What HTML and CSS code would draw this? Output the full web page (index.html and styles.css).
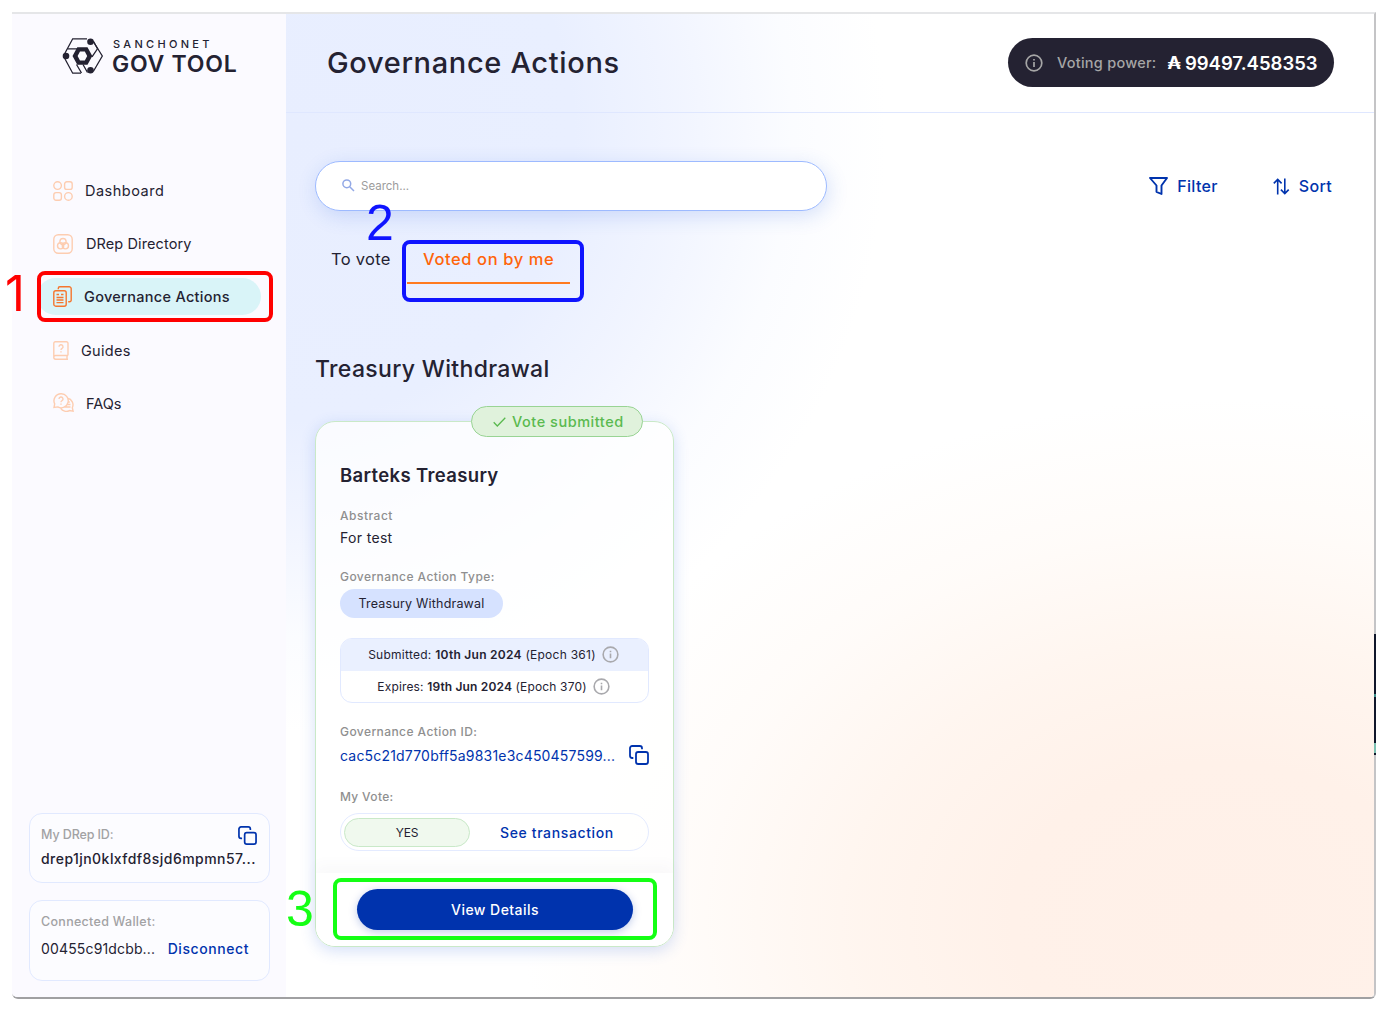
FILE: index.html
```html
<!DOCTYPE html>
<html lang="en">
<head>
<meta charset="utf-8">
<title>Governance Actions</title>
<link rel="stylesheet" href="styles.css">
</head>
<body>
<svg class="defs" width="0" height="0" aria-hidden="true">
  <symbol id="i-copy" viewBox="0 0 20 20"><g fill="none" stroke="currentColor" stroke-width="1.8"><rect x="7" y="7" width="12" height="12" rx="2.2"/><path d="M4.3 13H3.2A2.2 2.2 0 0 1 1 10.8V3.2A2.2 2.2 0 0 1 3.2 1h7.6A2.2 2.2 0 0 1 13 3.2v1.1"/></g></symbol>
  <symbol id="i-info" viewBox="0 0 18 18"><circle cx="9" cy="9" r="7.8" fill="none" stroke="currentColor" stroke-width="1.7"/><path d="M9 8v5M9 5v1.6" stroke="currentColor" stroke-width="1.7"/></symbol>
</svg>
<div class="window">
  <aside class="sidebar">
    <div class="logo">
      <svg width="42" height="38" viewBox="0 0 42 38">
        <g fill="none" stroke="#242232" stroke-width="1.3">
          <path d="M25 1.800H10.700L2.500 17M2.500 21l8.200 15.200H19M31 4l9.300 15-9 15.500"/>
          <path d="M5.500 11.800H15M31.500 4.500l4 7.300-5.500 8M14.500 27.500l5 8.500M21 27.500l4.500 8"/>
        </g>
        <path fill="#242232" fill-rule="evenodd" d="M15.300 10.200h10.200L30.300 19l-4.800 8.800H15.300L10.500 19zM18 14.600 15.600 19l2.400 4.400h4.800L25.200 19l-2.400-4.400z"/>
        <circle cx="28.500" cy="4.800" r="3.300" fill="#242232"/><circle cx="4" cy="19" r="3.300" fill="#242232"/><circle cx="28.500" cy="33.200" r="3.300" fill="#242232"/>
      </svg>
      <div class="logo-text"><span class="logo-top">SANCHONET</span><span class="logo-main">GOV TOOL</span></div>
    </div>
    <nav class="nav">
      <a class="nav-item"><svg width="20" height="20" viewBox="0 0 20 20"><g fill="none" stroke="currentColor" stroke-width="1.400"><circle cx="4.600" cy="4.600" r="3.800"/><rect x="11.600" y="0.800" width="7.600" height="7.600" rx="2.200"/><rect x="0.800" y="11.600" width="7.600" height="7.600" rx="2.200"/><circle cx="15.400" cy="15.400" r="3.800"/></g></svg><span class="n-dash">Dashboard</span></a>
      <a class="nav-item"><svg width="20" height="20" viewBox="0 0 20 20"><g fill="none" stroke="currentColor" stroke-width="1.400"><rect x="0.800" y="0.800" width="18.400" height="18.400" rx="4.500"/><circle cx="10" cy="7.600" r="3.100"/><circle cx="7.600" cy="11.800" r="3.100"/><circle cx="12.400" cy="11.800" r="3.100"/></g></svg><span class="n-drep">DRep Directory</span></a>
      <a class="nav-item active"><svg width="19" height="21" viewBox="0 0 19 21"><g fill="none" stroke="currentColor" stroke-width="1.400"><rect x="0.800" y="4.800" width="12.400" height="15.400" rx="2"/><path d="M5.300 3.200V2.300A1.500 1.500 0 0 1 6.800.8h9.400a2 2 0 0 1 2 2v11.400a1.500 1.500 0 0 1-1.500 1.500h-1.500M3.500 8.500h2.500M8 8.500h2.500M3.500 11.500h7M3.500 14h7M3.500 16.600h7"/></g></svg><span class="n-gov">Governance Actions</span></a>
      <a class="nav-item"><svg width="16" height="19" viewBox="0 0 16 19"><g fill="none" stroke="currentColor" stroke-width="1.400"><path d="M15 14.500V2.300A1.500 1.500 0 0 0 13.500.8H2.300A1.500 1.500 0 0 0 .8 2.300v13.900M15 14.500H2.600a1.850 1.850 0 0 0 0 3.700H15M14 14.500v3.700"/><path d="M6 5.800a2 2 0 1 1 3 1.700q-1 .5-1 1.500M8 10.300v1.200"/></g></svg><span class="n-guides">Guides</span></a>
      <a class="nav-item"><svg width="21" height="20" viewBox="0 0 21 20"><g fill="none" stroke="currentColor" stroke-width="1.400"><path d="M8 .8a7 7 0 0 0-6.300 10.100L1 14.500l3.800-.6A7 7 0 1 0 8 .8zM14.600 5.300a6.600 6.600 0 0 1 4.700 9.400l.8 3.500-3.700-.6a6.700 6.700 0 0 1-8.700-2.300M14.800 9h2M13.800 11.500h3.700M11.500 14h6"/><path d="M6 6a2 2 0 1 1 3 1.700Q8 8.200 8 9.200M8 10.500v1.200"/></g></svg><span class="n-faqs">FAQs</span></a>
    </nav>
    <div class="account">
      <section class="box drep">
        <svg class="copy" width="19" height="19" viewBox="0 0 20 20"><use href="#i-copy" width="20" height="20"/></svg>
        <div class="label l-drep">My DRep ID:</div>
        <div class="drep-id">drep1jn0klxfdf8sjd6mpmn57...</div>
      </section>
      <section class="box wallet">
        <div class="label l-wallet">Connected Wallet:</div>
        <div class="wallet-row"><span class="addr">00455c91dcbb...</span><a class="disconnect">Disconnect</a></div>
      </section>
    </div>
  </aside>
  <main class="main">
    <header class="header">
      <h1>Governance Actions</h1>
      <div class="power">
        <svg width="18" height="18"><use href="#i-info"/></svg>
        <span class="power-label">Voting power:</span><span class="ada">₳</span><span class="power-value">99497.458353</span>
      </div>
    </header>
    <div class="content">
      <div class="toolbar">
        <div class="search">
          <svg width="13" height="13" viewBox="0 0 13 13"><g fill="none" stroke="#93a9e6" stroke-width="1.500"><circle cx="4.800" cy="4.800" r="3.900"/><path d="M7.700 7.700 12 12"/></g></svg>
          <span class="placeholder">Search...</span>
        </div>
        <div class="tools">
          <a class="tool"><svg width="19" height="18" viewBox="0 0 19 18"><path d="M1 1h17l-5.500 7.500V17L7.500 14.800V8.500z" fill="none" stroke="currentColor" stroke-width="1.900" stroke-linejoin="round"/></svg><span class="filter">Filter</span></a>
          <a class="tool"><svg width="17" height="17" viewBox="0 0 17 17"><path d="M4.700 16.500V1.500M.8 5.400l3.900-4 3.900 4M11.800.5v15M7.900 11.600l3.900 4 3.900-4" fill="none" stroke="currentColor" stroke-width="1.600"/></svg><span class="sort">Sort</span></a>
        </div>
      </div>
      <div class="tabs"><a class="tab">To vote</a><a class="tab selected">Voted on by me</a></div>
      <h2>Treasury Withdrawal</h2>
      <article class="card">
        <div class="badge"><svg width="13" height="10" viewBox="0 0 13 10"><path d="M.7 5.300 4.300 9 12.300.8" fill="none" stroke="currentColor" stroke-width="1.300"/></svg><span>Vote submitted</span></div>
        <div class="card-body">
          <h3>Barteks Treasury</h3>
          <div class="label l-abs">Abstract</div>
          <div class="abstract">For test</div>
          <div class="label l-type">Governance Action Type:</div>
          <div class="chip">Treasury Withdrawal</div>
          <div class="dates">
            <div class="date submitted"><span>Submitted: <b>10th Jun 2024</b> (Epoch 361)</span><svg width="17" height="17" viewBox="0 0 18 18"><use href="#i-info" width="18" height="18"/></svg></div>
            <div class="date expires"><span>Expires: <b>19th Jun 2024</b> (Epoch 370)</span><svg width="17" height="17" viewBox="0 0 18 18"><use href="#i-info" width="18" height="18"/></svg></div>
          </div>
          <div class="label l-id">Governance Action ID:</div>
          <div class="id-row"><span>cac5c21d770bff5a9831e3c450457599...</span><svg width="20" height="20" viewBox="0 0 20 20"><use href="#i-copy" width="20" height="20"/></svg></div>
          <div class="label l-vote">My Vote:</div>
          <div class="vote"><div class="yes">YES</div><a class="see">See transaction</a></div>
        </div>
        <footer class="card-foot"><a class="button">View Details</a></footer>
      </article>
    </div>
  </main>
</div>
<div class="edge"></div>
<div class="mark mark-red"></div><div class="mark mark-blue"></div><div class="mark mark-green"></div>
<span class="num num-1">1</span><span class="num num-2">2</span><span class="num num-3">3</span>
</body>
</html>
```
FILE: styles.css
```css
* { box-sizing: border-box; }
body { margin: 0; width: 1390px; height: 1015px; padding: 12px 14px 16px 12px; background: #fff; color: #242232; font-family: Inter, "Noto Sans", sans-serif; position: relative; overflow: hidden; }
h1, h2, h3 { margin: 0; }
span, a, .label, .drep-id { white-space: nowrap; }
svg { flex: none; display: block; }
.defs { position: absolute; }
.window { display: flex; height: 987px; border-top: 2px solid #e5e6e8; border-right: 2px solid #c4c4c6; border-bottom: 2px solid #a0a0a2; border-radius: 0 0 6px 6px; overflow: hidden; }

/* Sidebar */
.sidebar { width: 274px; flex: none; background: #fbfaff; display: flex; flex-direction: column; padding: 23px 17px 16px; }
.logo { display: flex; gap: 8px; padding-left: 33px; height: 38px; }
.logo-text { display: flex; flex-direction: column; }
.logo-top { font-size: 11px; line-height: 15px; font-weight: 500; letter-spacing: 3.3px; padding-left: 1px; }
.logo-main { font-size: 23px; line-height: 24px; font-weight: 600; letter-spacing: .75px; }
.nav { margin: 97px 8px 0; display: flex; flex-direction: column; gap: 16.2px; }
.nav-item { display: flex; align-items: center; gap: 12px; height: 37px; padding-left: 16px; border-radius: 19px; font-size: 14.5px; letter-spacing: .3px; width: 224px; }
.nav-item svg { color: #fdcdb1; }
.nav-item.active { background: #d9f4f8; font-weight: 500; }
.nav-item.active svg { color: #f5762e; }
.n-dash { letter-spacing: .5px; }
.n-drep { letter-spacing: .1px; padding-left: 1px; }
.n-faqs { letter-spacing: 0; }
.account { margin-top: auto; display: flex; flex-direction: column; gap: 17px; }
.box { border: 1px solid #e1e9ff; border-radius: 13px; background: #fcfcff; padding: 12px 11px; width: 241px; position: relative; }
.drep { height: 70px; }
.wallet { height: 81px; }
.label { font-size: 12px; line-height: 18px; font-weight: 500; color: #8f8f8f; }
.box .label { color: #a2a2a4; font-size: 12.5px; }
.box .l-drep { letter-spacing: -.1px; }
.l-wallet { letter-spacing: .3px; }
.drep-id { font-size: 14px; line-height: 20px; font-weight: 500; margin-top: 5px; letter-spacing: .45px; }
.copy { position: absolute; right: 12px; top: 12px; color: #0033ad; }
.wallet-row { display: flex; gap: 12.5px; margin-top: 8px; font-size: 14px; line-height: 20px; }
.addr { letter-spacing: .15px; }
.disconnect { color: #0033ad; font-weight: 500; letter-spacing: .57px; }

/* Main area */
.main { flex: 1; background: radial-gradient(ellipse 700px 520px at 86% 92%, #fff0e8 0, #fff1e9 30%, rgba(255,243,235,.8) 52%, rgba(255,248,243,.5) 76%, rgba(255,255,255,0) 100%), radial-gradient(ellipse 600px 600px at 0 12%, #e8eeff 0, #e9efff 48%, rgba(239,243,255,.85) 66%, rgba(248,250,255,.6) 84%, rgba(255,255,255,0) 100%), #fff; }
.header { height: 99px; border-bottom: 1px solid #dfe7ff; display: flex; justify-content: space-between; align-items: center; padding: 0 40px 1px 41px; }
h1 { font-size: 29px; font-weight: 500; line-height: 40px; letter-spacing: .65px; }
.power { width: 326px; height: 49px; border-radius: 25px; background: #242232; color: #fff; display: flex; align-items: center; padding-left: 17px; }
.power svg { color: #a6a6a6; }
.power-label { color: #a6a6a6; font-size: 14.5px; font-weight: 500; margin-left: 14px; letter-spacing: .25px; }
.ada { font-size: 18px; font-weight: 700; margin-left: 11px; }
.power-value { font-size: 18.5px; font-weight: 600; margin-left: 4px; }
.content { padding: 48px 42px 0 29px; }
.toolbar { display: flex; justify-content: space-between; align-items: center; height: 50px; }
.search { width: 512px; height: 50px; border: 1px solid #9dbaff; border-radius: 25px; background: #fff; box-shadow: 2px 5px 20px rgba(47,98,220,.18); display: flex; align-items: center; gap: 6px; padding: 0 0 1px 26px; }
.placeholder { font-size: 11.5px; color: #9c9c9c; }
.tools { display: flex; gap: 55px; color: #0033ad; font-size: 16px; font-weight: 500; letter-spacing: .33px; }
.tool { display: flex; align-items: center; gap: 9px; }
.tabs { display: flex; margin-top: 25px; height: 48px; font-size: 16.5px; line-height: 47px; letter-spacing: .3px; }
.tab { padding-left: 16px; width: 92px; }
.selected { width: 163px; color: #ff640a; font-weight: 500; letter-spacing: .6px; border-bottom: 2px solid #ff7a1f; }
h2 { font-size: 23px; font-weight: 500; line-height: 34px; margin-top: 68px; letter-spacing: .33px; }

/* Action card */
.card { position: relative; width: 359px; height: 526px; margin-top: 35px; border: 1px solid #c9e9c8; border-radius: 20px; background: rgba(255,255,255,.75); box-shadow: 0 4px 15px rgba(47,98,220,.2); display: flex; flex-direction: column; }
.badge { position: absolute; right: 30px; top: -16px; width: 172px; height: 31px; border: 1px solid #99d494; border-radius: 16px; background: #e0f2dc; color: #5aba4f; display: flex; align-items: center; padding-left: 21px; gap: 6px; font-size: 14.5px; font-weight: 500; letter-spacing: .53px; }
.card-body { flex: 1; padding: 40px 24px 0; }
h3 { font-size: 18.5px; line-height: 26px; font-weight: 600; letter-spacing: .35px; }
.l-abs { margin-top: 19px; letter-spacing: .5px; }
.abstract { font-size: 14px; line-height: 20px; margin-top: 3px; letter-spacing: .33px; }
.l-type { margin-top: 20px; letter-spacing: .42px; }
.chip { width: 163px; height: 29px; border-radius: 15px; background: #d6e2ff; font-size: 12.5px; line-height: 29px; text-align: center; margin-top: 3px; letter-spacing: .2px; }
.dates { border: 1px solid #e1e9ff; border-radius: 12px; margin-top: 20px; height: 65px; width: 309px; overflow: hidden; font-size: 12px; letter-spacing: .26px; }
.date { height: 31.5px; display: flex; align-items: center; justify-content: center; gap: 6px; padding-right: 2px; }
.date svg { color: #a9a9ad; }
.date b { font-weight: 600; }
.expires { letter-spacing: .15px; }
.submitted { background: #eaf0ff; }
.l-id { margin-top: 20px; letter-spacing: .42px; }
.id-row { display: flex; justify-content: space-between; align-items: center; width: 309px; color: #0033ad; font-size: 14px; height: 26px; margin-top: 1px; letter-spacing: .19px; }
.l-vote { margin-top: 20px; letter-spacing: .33px; }
.vote { display: flex; align-items: center; width: 309px; height: 38px; border: 1px solid #e4ebff; border-radius: 20px; margin-top: 7px; padding-left: 3px; }
.yes { width: 126px; height: 29px; border: 1px solid #c9e9c8; border-radius: 15px; background: #f0f9ee; font-size: 12px; line-height: 27px; text-align: center; letter-spacing: -.2px; }
.see { color: #0033ad; font-size: 14px; font-weight: 500; margin-left: 30px; letter-spacing: .63px; }
.card-foot { height: 73px; background: #fff; border-radius: 0 0 19px 19px; padding: 16px 41px 0; box-shadow: 0 -8px 14px rgba(80,80,120,.035); }
.button { display: block; width: 276px; height: 41px; border-radius: 21px; background: #0033ad; color: #fff; text-align: center; font-size: 14px; line-height: 41px; font-weight: 500; letter-spacing: .45px; box-shadow: 0 2px 8px rgba(0,51,173,.25); }

/* Sliver of another window at the right edge */
.edge { position: absolute; left: 1374px; top: 634px; width: 2px; height: 121px; background: linear-gradient(#10162a 0 60px, #3c8f8b 60px 63px, #10162a 63px 109px, #7cc0b2 109px 119px, #10162a 119px); }

/* Step callouts laid over the page */
.mark { position: absolute; border: 4px solid; border-radius: 8px; }
.mark-red { left: 37px; top: 271px; width: 236px; height: 51px; border-color: #f00; }
.mark-blue { left: 402px; top: 240px; width: 182px; height: 62px; border-color: #0f14ff; }
.mark-green { left: 333px; top: 878px; width: 324px; height: 62px; border-color: #14ff14; }
.num { position: absolute; font: 50px/50px "Liberation Sans", sans-serif; }
.num-1 { left: 5px; top: 269px; color: #f00; font-family: Inter, sans-serif; font-size: 49px; }
.num-2 { left: 366px; top: 198px; color: #0f14ff; }
.num-3 { left: 286px; top: 884px; color: #14ff14; }
```
